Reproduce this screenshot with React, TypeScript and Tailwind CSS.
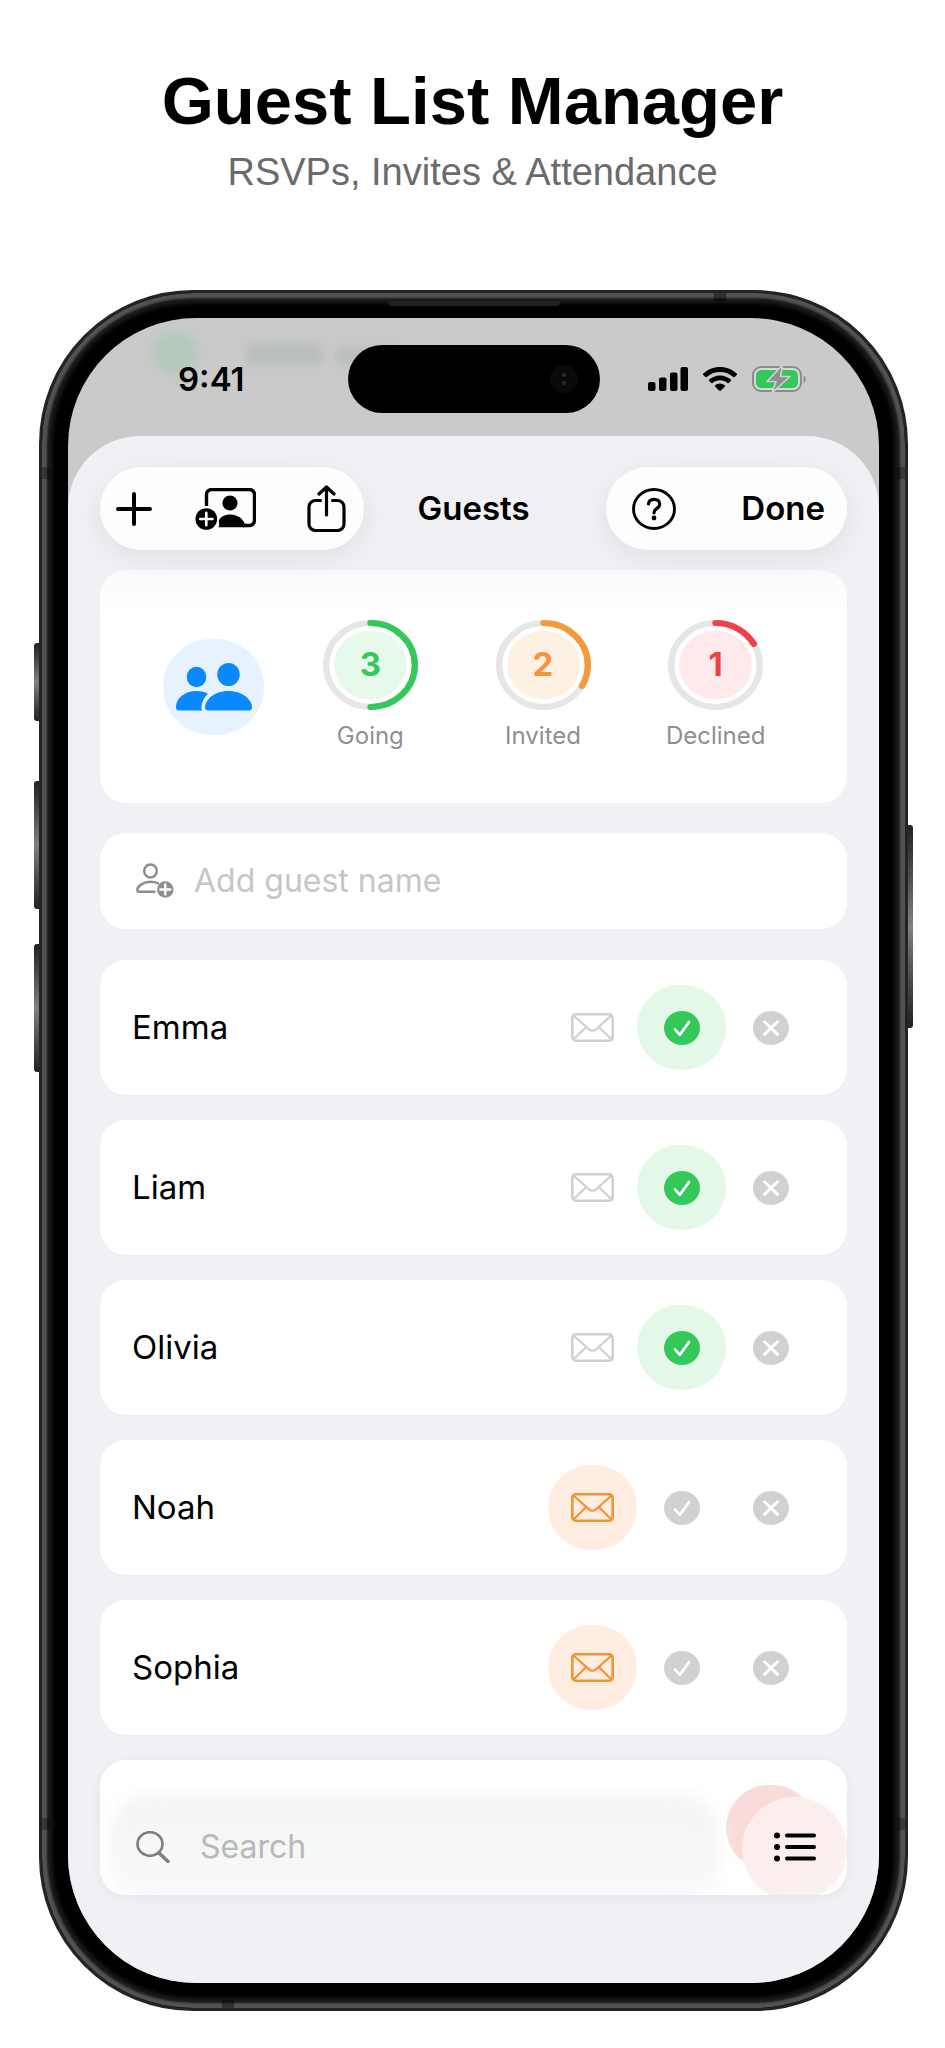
import { useState } from "react";

type Status = "invited" | "going" | "declined";

const stats = [
  { label: "Going", count: 3, share: 0.5, stroke: "#34c759", disc: "#e6f9ea", text: "text-[#34c759]" },
  { label: "Invited", count: 2, share: 0.333, stroke: "#f5993a", disc: "#fff0e4", text: "text-[#f5943a]" },
  { label: "Declined", count: 1, share: 0.166, stroke: "#f2404a", disc: "#ffe9ea", text: "text-[#ee4048]" },
];

const initialGuests: { name: string; status: Status }[] = [
  { name: "Emma", status: "going" },
  { name: "Liam", status: "going" },
  { name: "Olivia", status: "going" },
  { name: "Noah", status: "invited" },
  { name: "Sophia", status: "invited" },
];

const MailIcon = () => (
  <svg viewBox="0 0 43 29" className="h-[29px] w-[43px]" fill="none" stroke="currentColor" strokeWidth="2.6">
    <rect x="1.3" y="1.3" width="40.4" height="26.4" rx="3.5" />
    <path d="M2.5 2.5 18 16.3c2 1.800 5 1.800 7 0L40.500 2.500M2.500 26.500 15.500 13.800M40.500 26.500 27.500 13.800" strokeWidth="2.3" />
  </svg>
);

const CheckIcon = () => (
  <svg viewBox="0 0 36 34" preserveAspectRatio="none" className="h-[34px] w-9">
    <ellipse cx="18" cy="17" rx="18" ry="17" fill="currentColor" />
    <path d="m11 18.500 4.900 5.300L25 11" fill="none" stroke="#fff" strokeWidth="2.700" strokeLinecap="round" strokeLinejoin="round" />
  </svg>
);

const CrossIcon = () => (
  <svg viewBox="0 0 36 34" preserveAspectRatio="none" className="h-[34px] w-9">
    <ellipse cx="18" cy="17" rx="18" ry="17" fill="currentColor" />
    <path d="m11.500 10.800 13 12.600M24.500 10.800l-13 12.600" fill="none" stroke="#fff" strokeWidth="2.900" strokeLinecap="round" />
  </svg>
);

const choices = [
  { status: "invited" as Status, label: "Invited", Icon: MailIcon, on: "bg-[#ffede1] text-[#f59235]" },
  { status: "going" as Status, label: "Going", Icon: CheckIcon, on: "bg-[#e3f8e7] text-[#34c759]" },
  { status: "declined" as Status, label: "Declined", Icon: CrossIcon, on: "bg-[#fadcda] text-[#f2404a]" },
];

const Ring = ({ share, stroke, disc }: { share: number; stroke: string; disc: string }) => (
  <svg viewBox="0 0 90 90" preserveAspectRatio="none" className="col-start-1 row-start-1 h-[90px] w-[95px]">
    <circle cx="45" cy="45" r="42" fill="none" stroke="#e6e6e6" strokeWidth="6" />
    <circle cx="45" cy="45" r="34.500" fill={disc} />
    <circle
      cx="45"
      cy="45"
      r="42"
      fill="none"
      stroke={stroke}
      strokeWidth="6"
      strokeLinecap="round"
      pathLength="1"
      strokeDasharray={`${share} 1`}
      transform="rotate(-90 45 45)"
    />
  </svg>
);

const StatusBar = () => (
  <div className="relative flex h-[118px] items-start justify-between pl-[110px] pr-[72px] pt-[27px]">
    {/* what is left of the screen behind the sheet */}
    <div className="absolute left-[84px] top-[14px] h-[42px] w-[46px] rounded-full bg-[#b5c9bb] blur-[4px]" />
    <div className="absolute left-[178px] top-[25px] h-[22px] w-[76px] rounded bg-[#b9bebb] blur-[4px]" />
    <div className="absolute left-[268px] top-[29px] h-[18px] w-[60px] rounded bg-[#b9bebb] blur-[4px]" />
    <div className="relative flex h-[68px] items-center text-[33px] font-semibold leading-none">9:41</div>
    <div className="absolute left-1/2 top-[27px] flex h-[68px] w-[252px] -translate-x-1/2 items-center justify-end rounded-full bg-black pr-[22px]">
      <div className="flex h-7 w-7 flex-col items-center justify-center gap-1 rounded-full bg-[#0a0a0a]">
        <span className="h-1 w-1 rounded-full bg-[#2b2b2b]" />
        <span className="h-1 w-1 rounded-full bg-[#2b2b2b]" />
      </div>
    </div>
    <div className="flex h-[68px] items-center gap-[15px]">
      <svg viewBox="0 0 40 24" className="h-6 w-10">
        <rect x="0" y="15" width="7.500" height="9" rx="2" />
        <rect x="11" y="10.500" width="7.500" height="13.500" rx="2" />
        <rect x="22" y="5.500" width="7.500" height="18.500" rx="2" />
        <rect x="32.500" y="0" width="7.500" height="24" rx="2" />
      </svg>
      <svg viewBox="0 0 34 24" className="h-6 w-[34px]">
        <path d="M17 0C10.400 0 4.500 2.500.3 6.600c-.4.400-.4.900 0 1.300l2.100 2.100c.4.400.9.400 1.300 0C7.200 6.700 11.900 4.900 17 4.900s9.800 1.800 13.300 5.100c.4.400.9.400 1.300 0l2.100-2.100c.4-.4.400-.9 0-1.300C29.500 2.500 23.600 0 17 0Z" />
        <path d="M17 8.400c-4.200 0-8 1.600-10.900 4.200-.4.400-.4.900 0 1.300l2.200 2.100c.3.400.9.400 1.200.1 2-1.800 4.600-2.800 7.500-2.800s5.500 1 7.500 2.800c.3.300.9.300 1.200-.1l2.200-2.100c.4-.4.400-.9 0-1.300C25 10 21.200 8.400 17 8.400Z" />
        <path d="M17 16.600c-1.900 0-3.600.7-4.900 1.800-.4.300-.4.900 0 1.300l4.300 4c.3.400.9.400 1.200 0l4.300-4c.4-.4.400-1 0-1.300a7.600 7.600 0 0 0-4.900-1.800Z" />
      </svg>
      <svg viewBox="0 0 55 26" className="h-[26px] w-[55px]">
        <rect x="1" y="1" width="48" height="24" rx="8" fill="#d8d8d8" stroke="#8c8c8c" strokeWidth="2" />
        <rect x="4" y="4" width="42" height="18" rx="5.500" fill="#34c759" />
        <path d="M51.500 9.500c3 1 3 6.500 0 7.500Z" fill="#8c8c8c" />
        <path d="M30.500-1 15 15.500h9L20 27 38 10.500h-9.500Z" fill="#8f8f8f" stroke="#d0d0d0" strokeWidth="1.600" strokeLinejoin="round" />
      </svg>
    </div>
  </div>
);

const Toolbar = () => (
  <header className="relative z-10 grid h-[83px] grid-cols-[1fr_auto_1fr] items-center">
    <div className="flex h-full w-[264px] items-center gap-[43px] rounded-full bg-[#fdfdfe] pl-4 shadow-[0_8px_30px_rgba(0,0,0,0.07)]">
      <button type="button" aria-label="Add guest">
        <svg viewBox="0 0 36 34" className="h-[34px] w-9" stroke="#000" strokeWidth="4" strokeLinecap="round">
          <path d="M18 2v30M2 17h32" />
        </svg>
      </button>
      <button type="button" aria-label="Add from contacts">
        <svg viewBox="0 0 61 42" className="h-[42px] w-[61px]">
          <path d="M11.500 18V6.500a5 5 0 0 1 5-5h38a5 5 0 0 1 5 5v26a5 5 0 0 1-5 5H48" fill="none" stroke="#000" strokeWidth="3.400" />
          <circle cx="35" cy="15" r="7.600" />
          <path d="M23.500 39.200c1-2 .8-4 .2-6.200 1.500-4 6-6.400 11.300-6.400 8.500 0 14 5 15.500 11.400l-1 1.200Z" />
          <circle cx="11.300" cy="31" r="10.800" />
          <path d="M11.300 24.800v12.400M5.100 31h12.400" stroke="#fff" strokeWidth="2.600" strokeLinecap="round" />
        </svg>
      </button>
      <button type="button" aria-label="Share" className="ml-2">
        <svg viewBox="0 0 39 47" className="h-[47px] w-[39px]" fill="none" stroke="#000" strokeWidth="3.200" strokeLinecap="round" strokeLinejoin="round">
          <path d="M13.500 15.500H8.500a6.500 6.500 0 0 0-6.500 6.500v17a6.500 6.500 0 0 0 6.500 6.500h22a6.500 6.500 0 0 0 6.500-6.500V22a6.500 6.500 0 0 0-6.500-6.500H25.500" />
          <path d="M19.500 30V2.500M12 9l7.500-7 7.500 7" />
        </svg>
      </button>
    </div>
    <h2 className="text-[33px] font-semibold leading-none">Guests</h2>
    <div className="flex h-full w-[241px] items-center justify-between justify-self-end rounded-full bg-[#fdfdfe] pl-[26px] pr-[22px] shadow-[0_8px_30px_rgba(0,0,0,0.07)]">
      <button type="button" aria-label="Help">
        <svg viewBox="0 0 44 42" className="h-[42px] w-11" fill="none" stroke="#000" strokeLinecap="round">
          <ellipse cx="22" cy="21" rx="20.500" ry="19.500" strokeWidth="2.900" />
          <path d="M16.500 16c.3-3 2.500-4.700 5.600-4.700 3.300 0 5.600 1.900 5.600 4.700 0 2.200-1.200 3.400-3 4.600-1.800 1.100-2.700 2-2.700 4.200" strokeWidth="3.200" />
          <circle cx="22" cy="30" r="2.400" fill="#000" stroke="none" />
        </svg>
      </button>
      <button type="button" className="text-[33px] font-semibold leading-none">Done</button>
    </div>
  </header>
);

const Summary = () => (
  <section className="mt-5 flex h-[233px] items-center rounded-[26px] bg-white bg-linear-to-b from-[#fafafa] to-white to-20% pl-[63px] pr-[45px]">
    <div className="flex h-24 w-[101px] shrink-0 items-center justify-center rounded-full bg-[#e6f2ff]">
      <svg viewBox="0 0 76 48" className="h-12 w-[76px]" fill="#0a88ff">
        <ellipse cx="20.500" cy="14" rx="9.800" ry="10.200" />
        <ellipse cx="52.500" cy="11.500" rx="11.200" ry="11.500" />
        <path d="M26 47.500H3c-2.400 0-3-1.500-3-3.700C0 36 8 28 20.500 28c4.500 0 8.500 1 11.500 2.700-4 3.800-6.500 8.300-6.500 13.300 0 1.300.1 2.500.5 3.500Z" />
        <path d="M32.500 47.500c-2.400 0-3.500-1-3.500-3.300C29 37.500 37.500 28 52.500 28S76 37.500 76 44.200c0 2.300-1.100 3.300-3.500 3.300Z" />
      </svg>
    </div>
    <div className="ml-5 flex flex-1">
      {stats.map((s) => (
        <div key={s.label} className="flex flex-1 flex-col items-center gap-3 pb-1">
          <div className="grid place-items-center">
            <Ring share={s.share} stroke={s.stroke} disc={s.disc} />
            <span className={`col-start-1 row-start-1 text-[33px] font-bold leading-none ${s.text}`}>{s.count}</span>
          </div>
          <span className="text-[24px] leading-7 text-[#8f8f92]">{s.label}</span>
        </div>
      ))}
    </div>
  </section>
);

const Choices = ({ name, value, onPick }: { name: string; value: Status; onPick: (s: Status) => void }) => (
  <div className="flex">
    {choices.map(({ status, label, Icon, on }) => (
      <button
        key={status}
        type="button"
        aria-label={`${label} ${name}`}
        aria-pressed={value === status}
        onClick={() => onPick(status)}
        className={`flex h-[85px] w-[89px] items-center justify-center rounded-full ${value === status ? on : "text-[#d1d1d1]"}`}
      >
        <Icon />
      </button>
    ))}
  </div>
);

const App = () => {
  const [guests, setGuests] = useState(initialGuests);

  const pick = (name: string, status: Status) =>
    setGuests(guests.map((g) => (g.name === name ? { ...g, status } : g)));

  return (
    <main className="min-h-screen overflow-hidden bg-white pb-9 text-black">
      <div className="pt-[63px] text-center font-['Liberation_Sans',Arial,sans-serif]">
        <h1 className="text-[67px] font-bold leading-[76px]">Guest List Manager</h1>
        <p className="mt-3 text-[38px] leading-[42px] text-[#6b6b6b]">RSVPs, Invites &amp; Attendance</p>
      </div>

      <div className="relative ml-[39px] mr-[37px] mt-[97px] font-[Inter,sans-serif]">
        {/* side keys */}
        <div className="absolute -left-[5px] top-[353px] h-[78px] w-3 rounded-l-[3px] bg-linear-to-b from-[#222] via-[#808080] to-[#222]" />
        <div className="absolute -left-[5px] top-[491px] h-[128px] w-3 rounded-l-[3px] bg-linear-to-b from-[#222] via-[#808080] to-[#222]" />
        <div className="absolute -left-[5px] top-[654px] h-[128px] w-3 rounded-l-[3px] bg-linear-to-b from-[#222] via-[#808080] to-[#222]" />
        <div className="absolute -right-[5px] top-[535px] h-[203px] w-3 rounded-r-[3px] bg-linear-to-b from-[#222] via-[#808080] to-[#222]" />

        {/* metal frame, black bezel, screen */}
        <div className="relative rounded-[154px] border-[3px] border-[#242424] bg-black px-[26px] pb-[25px] pt-[25px] shadow-[inset_0_0_2px_5px_#525252,inset_0_0_4px_10px_#1c1c1c]">
          {/* earpiece slot and antenna bands */}
          <div className="absolute left-1/2 top-2 h-[5px] w-[172px] -translate-x-1/2 rounded-b-sm bg-[#222]" />
          <div className="absolute right-[179px] top-0 h-2 w-3 bg-black/40" />
          <div className="absolute bottom-0 left-[180px] h-2 w-3 bg-black/40" />
          <div className="absolute left-0 top-[174px] h-3 w-2 bg-black/30" />
          <div className="absolute right-0 top-[174px] h-3 w-2 bg-black/30" />
          <div className="absolute bottom-[178px] left-0 h-3 w-2 bg-black/30" />
          <div className="absolute bottom-[178px] right-0 h-3 w-2 bg-black/30" />

          <div className="overflow-hidden rounded-[128px] bg-[#cacaca]">
            <StatusBar />

            <div className="rounded-t-[72px] bg-[#f0f0f5] px-8 pb-[88px] pt-[31px]">
              <Toolbar />
              <Summary />

              <label className="mt-[30px] flex h-24 items-center rounded-[26px] bg-white pl-9">
                <svg viewBox="0 0 38 36" className="h-9 w-[38px] shrink-0" fill="none" stroke="#8e8e8e" strokeWidth="2.500">
                  <ellipse cx="14.500" cy="8" rx="6.300" ry="6.600" />
                  <path d="M22 20.300c-2-1-4.500-1.500-7.500-1.500C7.500 18.800 1.500 23 1.300 27c0 1.200.7 1.800 2 1.800H18.500" strokeLinecap="round" />
                  <circle cx="29.300" cy="26.500" r="8.300" fill="#8e8e8e" stroke="none" />
                  <path d="M29.300 21.500v10M24.300 26.500h10" stroke="#fff" strokeWidth="2.400" strokeLinecap="round" />
                </svg>
                <input
                  type="text"
                  aria-label="Add guest name"
                  placeholder="Add guest name"
                  className="ml-5 w-full bg-transparent text-[32px] outline-none placeholder:text-[#c6c6c8]"
                />
              </label>

              <ul className="mt-[31px] flex flex-col gap-[25px]">
                {guests.map((g) => (
                  <li key={g.name} className="flex h-[135px] items-center justify-between rounded-[26px] bg-white pl-8 pr-8 shadow-[0_1px_2px_rgba(0,0,0,0.03)]">
                    <span className="text-[33px]">{g.name}</span>
                    <Choices name={g.name} value={g.status} onPick={(s) => pick(g.name, s)} />
                  </li>
                ))}

                {/* last row sits under the floating search bar */}
                <li className="flex h-[135px] rounded-[26px] shadow-[0_2px_12px_rgba(0,0,0,0.05)]">
                  <div className="relative flex flex-1 items-center justify-end overflow-hidden rounded-[26px] bg-white pr-8">
                    <div className="h-[85px] w-[89px] rounded-full bg-[#f9dcda]" />
                    <div className="absolute inset-x-0 bottom-0 top-[30px]">
                      <div className="absolute -bottom-2 left-2 right-[125px] top-1 rounded-[44px] bg-linear-to-b from-[#f3f4f4] to-[#f8f9f9] blur-[8px]" />
                      <div className="absolute right-0 top-[7px] h-[104px] w-[105px] rounded-full bg-linear-to-br from-[#fceeec] from-40% to-[#f8f2f1]" />
                      <div className="relative flex h-full items-center justify-between pl-9 pr-[31px] pt-2">
                        <label className="flex flex-1 items-center">
                          <svg viewBox="0 0 34 32" className="h-8 w-[34px] shrink-0" fill="none" stroke="#808080" strokeLinecap="round">
                            <ellipse cx="14" cy="13" rx="12.500" ry="11.800" strokeWidth="2.700" />
                            <path d="m23 22 9 8.500" strokeWidth="3.600" />
                          </svg>
                          <input
                            type="search"
                            aria-label="Search"
                            placeholder="Search"
                            className="ml-[30px] w-full bg-transparent text-[32px] outline-none placeholder:text-[#b9b9ba]"
                          />
                        </label>
                        <button type="button" aria-label="List options">
                          <svg viewBox="0 0 42 30" className="h-[30px] w-[42px]" stroke="#000" strokeWidth="4" strokeLinecap="round">
                            <path d="M13 3.500h27M13 15h27M13 26.500h27" />
                            <path d="M3 3.500h.01M3 15h.01M3 26.500h.01" strokeWidth="6" />
                          </svg>
                        </button>
                      </div>
                    </div>
                  </div>
                </li>
              </ul>
            </div>
          </div>
        </div>
      </div>
    </main>
  );
};

export default App;
